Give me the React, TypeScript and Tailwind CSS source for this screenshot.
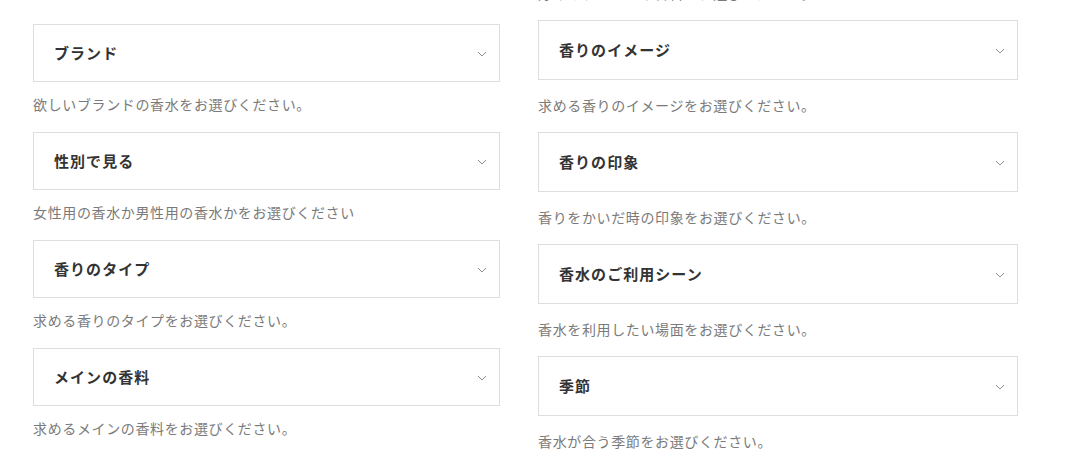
const leftItems = [
  { title: "ブランド", note: "欲しいブランドの香水をお選びください。" },
  { title: "性別で見る", note: "女性用の香水か男性用の香水かをお選びください" },
  { title: "香りのタイプ", note: "求める香りのタイプをお選びください。" },
  { title: "メインの香料", note: "求めるメインの香料をお選びください。" },
];

const rightItems = [
  { title: "香りのイメージ", note: "求める香りのイメージをお選びください。" },
  { title: "香りの印象", note: "香りをかいだ時の印象をお選びください。" },
  { title: "香水のご利用シーン", note: "香水を利用したい場面をお選びください。" },
  { title: "季節", note: "香水が合う季節をお選びください。" },
];

function Chevron() {
  return (
    <svg width="10" height="6" viewBox="0 0 10 6" fill="none" className="mt-[2px] shrink-0">
      <path d="M1 1l4 4 4-4" stroke="#8f8f8f" strokeWidth="1" />
    </svg>
  );
}

function SelectBox({ title, tall }: { title: string; tall?: boolean }) {
  return (
    <button
      type="button"
      className={
        "flex w-full items-center justify-between border border-[#dedede] bg-white pl-[20px] pr-[12px] text-left " +
        (tall ? "h-[60px]" : "h-[58px]")
      }
    >
      <span className="text-[15px] font-bold tracking-[0.07em] text-[#333]">{title}</span>
      <Chevron />
    </button>
  );
}

function Note({ children }: { children: string }) {
  return <p className="h-[20px] text-[14px] leading-[20px] tracking-[0.045em] text-[#7a7a7a]">{children}</p>;
}

export default function App() {
  return (
    <div
      className="flex h-[454px] w-[1068px] gap-[38px] overflow-hidden bg-white pl-[33px]"
      style={{ fontFamily: '"Noto Sans CJK JP", "Noto Sans", sans-serif' }}
    >
      <div className="w-[467px] pt-[24px]">
        {leftItems.map((item) => (
          <div key={item.title}>
            <SelectBox title={item.title} />
            <div className="mt-[12px] mb-[18px]">
              <Note>{item.note}</Note>
            </div>
          </div>
        ))}
      </div>
      <div className="mt-[-17px] w-[480px]">
        {/* note of the block above, mostly scrolled out of view */}
        <div className="mb-[17px]">
          <Note>好みのテイストや香料をお選びください。</Note>
        </div>
        {rightItems.map((item) => (
          <div key={item.title}>
            <SelectBox title={item.title} tall />
            <div className="mt-[15px] mb-[17px]">
              <Note>{item.note}</Note>
            </div>
          </div>
        ))}
      </div>
    </div>
  );
}
